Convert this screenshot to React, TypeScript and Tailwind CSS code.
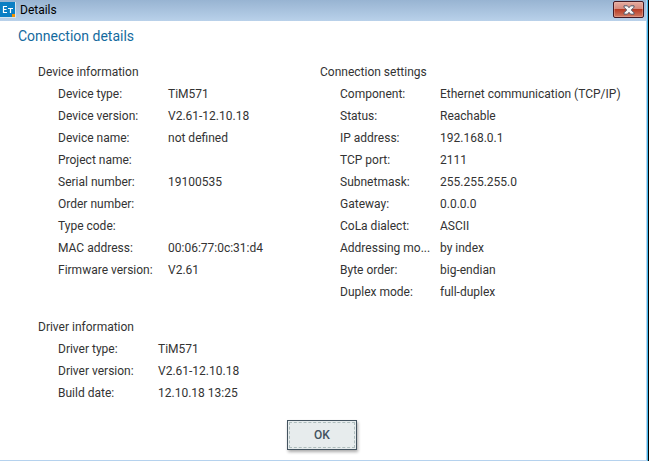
type Entry = [label: string, value: string];

const device: Entry[] = [
  ["Device type:", "TiM571"],
  ["Device version:", "V2.61-12.10.18"],
  ["Device name:", "not defined"],
  ["Project name:", ""],
  ["Serial number:", "19100535"],
  ["Order number:", ""],
  ["Type code:", ""],
  ["MAC address:", "00:06:77:0c:31:d4"],
  ["Firmware version:", "V2.61"],
];

const connection: Entry[] = [
  ["Component:", "Ethernet communication (TCP/IP)"],
  ["Status:", "Reachable"],
  ["IP address:", "192.168.0.1"],
  ["TCP port:", "2111"],
  ["Subnetmask:", "255.255.255.0"],
  ["Gateway:", "0.0.0.0"],
  ["CoLa dialect:", "ASCII"],
  ["Addressing mo...", "by index"],
  ["Byte order:", "big-endian"],
  ["Duplex mode:", "full-duplex"],
];

const driver: Entry[] = [
  ["Driver type:", "TiM571"],
  ["Driver version:", "V2.61-12.10.18"],
  ["Build date:", "12.10.18 13:25"],
];

function Section({ title, entries, columns }: { title: string; entries: Entry[]; columns: string }) {
  return (
    <section>
      <h2>{title}</h2>
      <dl className="pl-5">
        {entries.map(([label, value]) => (
          <div key={label} className={`grid ${columns}`}>
            <dt className="whitespace-nowrap">{label}</dt>
            <dd className="whitespace-nowrap">{value}</dd>
          </div>
        ))}
      </dl>
    </section>
  );
}

function AppIcon() {
  return (
    <svg width="16" height="16" viewBox="0 0 16 16" aria-hidden="true">
      <rect width="16" height="16" fill="#d5e4f0" />
      <rect width="15" height="15" fill="#0b7fc4" />
      <path d="M7 4.500H3.500v6H7M3.500 7.500h3M8 6.500h5M10.500 6.500V11" stroke="#fff" strokeWidth="1.200" fill="none" />
      <rect x="12" y="12" width="3" height="3" fill="#f39200" />
    </svg>
  );
}

function CloseIcon() {
  return (
    <svg width="12" height="10" viewBox="0 0 12 10" aria-hidden="true">
      <path
        d="M1 .8h3.400L6 2.700 7.600.8H11v1.400L8.300 5 11 7.800v1.400H7.600L6 7.300 4.400 9.200H1V7.800L3.700 5 1 2.200z"
        fill="#f7f7f7"
        stroke="#535666"
        strokeWidth="1"
      />
    </svg>
  );
}

export default function App() {
  return (
    <div className="flex min-h-screen flex-col border-r border-black bg-white font-['Roboto',sans-serif] text-xs text-[#333]">
      <div className="flex grow flex-col border-r border-[#45b9ea]">
        <div className="flex grow flex-col border-r border-b border-[#b5d2ee]">
          <header className="flex h-[21px] items-start justify-between bg-linear-to-b from-[#98b4d2] to-[#b9d1ea]">
            <div className="flex items-center gap-1 pt-px text-black">
              <AppIcon />
              <span className="leading-[18px]">Details</span>
            </div>
            <button
              type="button"
              aria-label="Close"
              className="mt-px mr-[2px] flex h-[17px] w-[31px] items-center justify-center rounded-xs border border-[#431a24] bg-[linear-gradient(#e6aca0,#d68b7e_45%,#b83c25_50%,#d07a62)] shadow-[inset_0_0_0_1px_#f0c0b466]"
            >
              <CloseIcon />
            </button>
          </header>
          <main className="flex grow flex-col pr-5 pl-[18px] pt-[5px] pb-[10px]">
            <h1 className="text-sm leading-5 text-[#146a9e]">Connection details</h1>
            <div className="grid grid-cols-[282px_1fr] pt-[15px] pl-5 leading-[22px]">
              <div className="flex flex-col gap-[35px]">
                <Section title="Device information" entries={device} columns="grid-cols-[110px_1fr]" />
                <Section title="Driver information" entries={driver} columns="grid-cols-[100px_1fr]" />
              </div>
              <Section title="Connection settings" entries={connection} columns="grid-cols-[100px_1fr]" />
            </div>
            <footer className="mt-auto flex justify-center">
              <button
                type="button"
                className="h-[30px] w-[70px] border border-[#43535f] bg-[#e7eced] p-px font-medium text-[#43535f] shadow-[1px_2px_3px_#00000055]"
              >
                <span className="flex h-full items-center justify-center border border-dashed border-[#aebdbd]">OK</span>
              </button>
            </footer>
          </main>
        </div>
      </div>
    </div>
  );
}
